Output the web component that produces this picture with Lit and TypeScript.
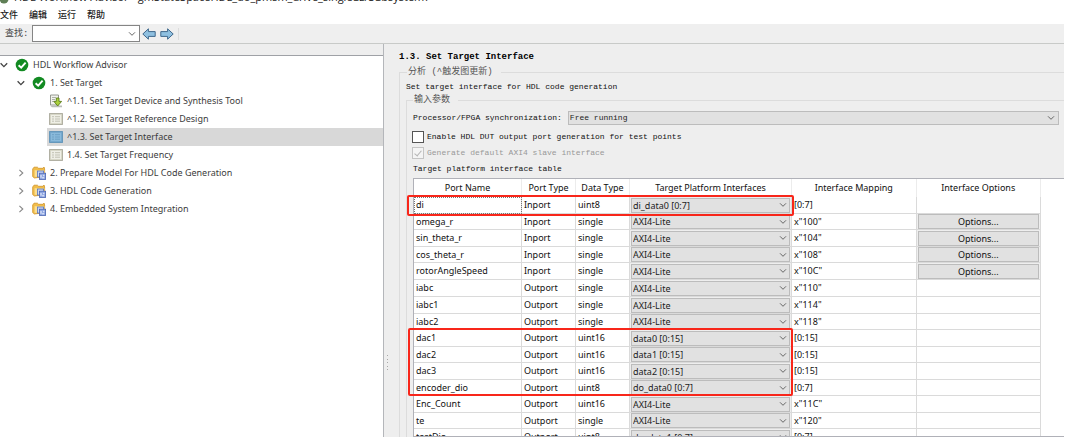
import { LitElement, html, svg, css, nothing } from "lit";
import { customElement, property } from "lit/decorators.js";
import { classMap } from "lit/directives/class-map.js";

type Row = {
  name: string;
  kind: "Inport" | "Outport";
  type: string;
  target: string;
  map: string;
  options?: boolean;
};

const ROWS: Row[] = [
  { name: "di", kind: "Inport", type: "uint8", target: "di_data0 [0:7]", map: "[0:7]" },
  { name: "omega_r", kind: "Inport", type: "single", target: "AXI4-Lite", map: 'x"100"', options: true },
  { name: "sin_theta_r", kind: "Inport", type: "single", target: "AXI4-Lite", map: 'x"104"', options: true },
  { name: "cos_theta_r", kind: "Inport", type: "single", target: "AXI4-Lite", map: 'x"108"', options: true },
  { name: "rotorAngleSpeed", kind: "Inport", type: "single", target: "AXI4-Lite", map: 'x"10C"', options: true },
  { name: "iabc", kind: "Outport", type: "single", target: "AXI4-Lite", map: 'x"110"' },
  { name: "iabc1", kind: "Outport", type: "single", target: "AXI4-Lite", map: 'x"114"' },
  { name: "iabc2", kind: "Outport", type: "single", target: "AXI4-Lite", map: 'x"118"' },
  { name: "dac1", kind: "Outport", type: "uint16", target: "data0 [0:15]", map: "[0:15]" },
  { name: "dac2", kind: "Outport", type: "uint16", target: "data1 [0:15]", map: "[0:15]" },
  { name: "dac3", kind: "Outport", type: "uint16", target: "data2 [0:15]", map: "[0:15]" },
  { name: "encoder_dio", kind: "Outport", type: "uint8", target: "do_data0 [0:7]", map: "[0:7]" },
  { name: "Enc_Count", kind: "Outport", type: "uint16", target: "AXI4-Lite", map: 'x"11C"' },
  { name: "te", kind: "Outport", type: "single", target: "AXI4-Lite", map: 'x"120"' },
  { name: "testDio", kind: "Outport", type: "uint8", target: "do_data1 [0:7]", map: "[0:7]" },
];

const chevronDown = html`<svg class="chev" width="8" height="6" viewBox="0 0 8 6" aria-hidden="true">
  <path d="M1 1.3 L4 4.3 L7 1.3" fill="none" stroke="currentColor" stroke-width="1" />
</svg>`;

type IconName = "check" | "device" | "task" | "taskActive" | "folder";

const ICONS: Record<IconName, unknown> = {
  check: svg`
    <circle cx="7" cy="7" r="6.3" fill="#128a22"/>
    <path d="M3.6 7.2 L6.2 9.7 L10.6 4.6" fill="none" stroke="#fff" stroke-width="1.9"/>`,
  device: svg`
    <path d="M1.5 1 H9.5 V11 H1.5 Z" fill="#f2f3ee" stroke="#8b8f86" stroke-width=".9"/>
    <path d="M3 3.5 H7 M3 5.5 H6 M3 7.5 H6" stroke="#9a9f98" stroke-width=".8"/>
    <path d="M1 11.5 H13 V13.3 H3 Z" fill="#b9bdb9"/>
    <path d="M7.3 4 H10 V7.4 H12.6 L8.7 12 L4.9 7.4 H7.3 Z" fill="#a9cf3c" stroke="#5c7d1b" stroke-width=".9"/>`,
  task: svg`
    <rect x=".6" y="1.6" width="12.8" height="10.8" fill="#dcdccd" stroke="#aaa99c" stroke-width="1"/>
    <rect x="2" y="3" width="10" height="8" fill="#efefe6"/>
    <path d="M3 4.7 H5 M3 7 H5 M3 9.2 H5 M6 4.7 H11 M6 7 H11 M6 9.2 H11" stroke="#bcbcae" stroke-width=".9"/>`,
  taskActive: svg`
    <rect x=".6" y="1.6" width="12.8" height="10.8" fill="#78abd0" stroke="#5f93b9" stroke-width="1"/>
    <rect x="2" y="3" width="10" height="8" fill="#8abadb"/>
    <path d="M3 4.7 H5 M3 7 H5 M3 9.2 H5 M6 4.7 H11 M6 7 H11 M6 9.2 H11" stroke="#6b9ec3" stroke-width=".9"/>`,
  folder: svg`
    <path d="M.7 3 L2 1.2 H5.4 L6.6 2.3 H11 L12 1 L12.6 3 V10.6 L2.4 12 L.7 10.6 Z" fill="#f1bd4a" stroke="#cf9327" stroke-width=".8"/>
    <path d="M2.6 4.2 H12.4 V10.8 H2.6 Z" fill="#fbdf92"/>
    <rect x="5.4" y="5" width="6.2" height="6" fill="#c9d6f5" stroke="#5874bd" stroke-width=".8"/>
    <rect x="7.4" y="7.2" width="6.2" height="6.2" fill="#8ea6e2" stroke="#4964b2" stroke-width=".8"/>
    <path d="M9 9 V11.8 M11.8 8.8 V10.2 M10.2 11.8 H12.2" stroke="#fff" stroke-width=".9"/>`,
};

@customElement("tree-row")
class TreeRow extends LitElement {
  @property() icon: IconName = "task";
  @property() label = "";
  @property({ type: Number }) level = 1;
  @property() state: "open" | "closed" | "leaf" = "leaf";
  @property({ type: Boolean }) selected = false;

  static styles = css`
    :host {
      display: block;
    }
    .row {
      display: flex;
      align-items: center;
      height: 18px;
      color: #3c3c3c;
      white-space: nowrap;
    }
    .l2 {
      padding-left: 17px;
    }
    .l3 {
      margin-left: 47px;
      padding-left: 2px;
    }
    .on {
      background: #d8d8d8;
    }
    .twist {
      width: 8px;
      height: 8px;
      margin-right: 7px;
      flex: none;
    }
    .icon {
      width: 14px;
      height: 14px;
      margin-right: 4px;
      flex: none;
    }
  `;

  render() {
    const cls = { row: true, l2: this.level === 2, l3: this.level === 3, on: this.selected };
    return html`<div class=${classMap(cls)} role="treeitem" aria-selected=${this.selected}>
      ${this.state === "leaf"
        ? nothing
        : html`<svg class="twist" viewBox="0 0 8 8">
            ${this.state === "open"
              ? svg`<path d="M.6 2.2 L3.9 5.6 L7.2 2.2" fill="none" stroke="#444" stroke-width="1.3"/>`
              : svg`<path d="M2.4 .8 L5.8 4 L2.4 7.2" fill="none" stroke="#888" stroke-width="1.1"/>`}
          </svg>`}
      <svg class="icon" viewBox="0 0 14 14">${ICONS[this.icon]}</svg>
      <span>${this.label}</span>
    </div>`;
  }
}

@customElement("app-root")
class AppRoot extends LitElement {
  static styles = css`
    :host {
      --ui: "Noto Sans", "Open Sans", "Noto Sans CJK SC", sans-serif;
      --mono: "Liberation Mono", "Noto Sans CJK SC", monospace;
      display: flex;
      flex-direction: column;
      height: 100vh;
      padding-right: 16px;
      box-sizing: border-box;
      overflow: hidden;
      background: #fff;
      color: #222;
      font: 9px/14px var(--ui);
    }
    * {
      box-sizing: border-box;
    }
    .title {
      display: flex;
      align-items: flex-end;
      gap: 4px;
      height: 6px;
      flex: none;
      overflow: hidden;
      font: 11px/18px "Open Sans", sans-serif;
      white-space: nowrap;
    }
    .title svg {
      flex: none;
    }
    .menu {
      display: flex;
      align-items: center;
      gap: 11px;
      height: 18px;
      flex: none;
    }
    button {
      font: inherit;
      color: inherit;
      padding: 0;
      margin: 0;
      border: 0;
      background: none;
    }
    .menu button {
      font-weight: 500;
    }
    .tools {
      display: flex;
      align-items: center;
      height: 20px;
      flex: none;
      padding-left: 5px;
      background: #efefef;
      border-bottom: 1px solid #c8cac8;
    }
    .tools label {
      width: 27px;
      font: 9px/14px var(--mono);
      color: #444;
    }
    .combo {
      display: grid;
      align-items: center;
    }
    .combo > * {
      grid-area: 1 / 1;
    }
    .chev {
      justify-self: end;
      margin-right: 4px;
      pointer-events: none;
      color: #666;
    }
    .find {
      width: 108px;
    }
    .find input {
      width: 100%;
      height: 17px;
      padding: 0 14px 0 3px;
      border: 1px solid #858585;
      background: #fff;
      font: inherit;
      border-radius: 0;
    }
    .nav {
      display: flex;
      gap: 4px;
      padding: 0 4px 0 2px;
      border-right: 1px solid #dcdcdc;
    }
    .nav button {
      display: flex;
    }
    .main {
      display: grid;
      grid-template-columns: 384px 6px minmax(0, 1fr);
      flex: 1;
      min-height: 0;
      background: #eeeeee;
    }
    .side {
      padding-top: 11px;
      border-right: 1px solid #b4b6ba;
    }
    .tree {
      height: 100%;
      background: #fff;
      border-top: 1px solid #9fa1a6;
    }
    .split {
      padding-top: 311px;
      color: #a8a8a8;
    }
    .pane {
      display: flex;
      flex-direction: column;
      min-height: 0;
      padding: 6px 0 0 9px;
      font: 8px/14px var(--mono);
      color: #111;
    }
    h1 {
      margin: 0 0 1px;
      font: bold 9px/14px var(--mono);
      color: #000;
    }
    fieldset {
      display: flex;
      flex-direction: column;
      flex: 1;
      min-width: 0;
      min-height: 0;
      margin: 0;
      padding: 0 0 0 6px;
      border: 1px solid #dcdcdc;
      border-width: 1px 0 0 1px;
    }
    legend {
      padding: 0 8px 0 1px;
      font: 9px/14px var(--mono);
      color: #555;
    }
    .outer-legend {
      margin-left: 1px;
    }
    .desc {
      height: 14px;
      margin: 0;
      padding-top: 1px;
      flex: none;
    }
    .sync {
      display: flex;
      align-items: center;
      gap: 6px;
      margin: 4px 5px 4px 0;
      flex: none;
    }
    .sync .combo {
      flex: 1;
    }
    select {
      appearance: none;
      width: 100%;
      min-width: 0;
      margin: 0;
      border: 1px solid #bcbcbc;
      border-radius: 0;
      background: #e1e1e1;
      color: #222;
      font: inherit;
    }
    .sync select {
      height: 14px;
      padding: 0 14px 0 1px;
      line-height: 12px;
    }
    .check {
      display: flex;
      align-items: center;
      gap: 3px;
      height: 16px;
      flex: none;
    }
    .check.off {
      color: #999;
    }
    .check input {
      appearance: none;
      display: grid;
      place-items: center;
      width: 12px;
      height: 12px;
      margin: 0 0 0 -1px;
      border: 1px solid #555;
      background: #fff;
    }
    .check input:disabled {
      border-color: #c4c4c4;
      background: #f4f4f4;
    }
    .check input:checked::before {
      content: "";
      width: 3px;
      height: 6px;
      margin-bottom: 2px;
      border: solid #b5b5b5;
      border-width: 0 1px 1px 0;
      rotate: 40deg;
    }
    .caption {
      height: 17px;
      line-height: 16px;
      flex: none;
    }
    .grid {
      position: relative;
      flex: 1;
      min-height: 0;
      font: 9px/14px var(--ui);
    }
    .clip {
      height: 100%;
      overflow: hidden;
      background: #fff;
      border: 1px solid #b0b1b8;
      border-right: 0;
    }
    table {
      width: 627px;
      table-layout: fixed;
      border-collapse: separate;
      border-spacing: 0;
    }
    .c-name {
      width: 108px;
    }
    .c-kind,
    .c-type {
      width: 54px;
    }
    .c-target {
      width: 162px;
    }
    th {
      height: 18px;
      padding: 0;
      font-weight: 400;
      border-right: 1px solid #ececec;
      white-space: nowrap;
    }
    td {
      height: 17px;
      padding: 0 0 0 2px;
      line-height: 14px;
      border-right: 1px solid #dadada;
      border-bottom: 1px solid #dadada;
      white-space: nowrap;
      overflow: hidden;
    }
    tr:nth-child(even):not(:nth-child(6)) td {
      height: 16px;
    }
    td.ctl {
      padding: 0 1px 0 1px;
      background: #eee;
    }
    td.ctl select {
      height: 15px;
      padding: 0 14px 0 1px;
      line-height: 13px;
    }
    td.ctl .chev {
      margin-right: 3px;
    }
    tr:first-child td:first-child {
      outline: 1px dotted #777;
      outline-offset: -1px;
    }
    td.ctl button {
      display: block;
      width: 100%;
      height: 15px;
      line-height: 13px;
      border: 1px solid #bcbcbc;
      background: #e1e1e1;
    }
    .mark {
      position: absolute;
      border: 2px solid #f8261a;
      border-radius: 2px;
      pointer-events: none;
    }
    .mark.one {
      left: -6px;
      top: 17px;
      width: 387px;
      height: 21px;
    }
    .mark.two {
      left: -5px;
      top: 150px;
      width: 385px;
      height: 68px;
    }
  `;

  private arrow(label: string, d: string) {
    return html`<button aria-label=${label}>
      <svg width="14" height="12" viewBox="0 0 14 12">
        <path d=${d} fill="#8fc0e0" stroke="#40688c" stroke-width="1" stroke-linejoin="round" />
      </svg>
    </button>`;
  }

  private row(r: Row) {
    return html`<tr>
      <td>${r.name}</td>
      <td>${r.kind}</td>
      <td>${r.type}</td>
      <td class="ctl">
        <div class="combo">
          <select aria-label="Target Platform Interfaces ${r.name}">
            <option>${r.target}</option>
          </select>
          ${chevronDown}
        </div>
      </td>
      <td>${r.map}</td>
      ${r.options ? html`<td class="ctl"><button>Options...</button></td>` : html`<td></td>`}
    </tr>`;
  }

  render() {
    return html`
      <div class="title">
        <svg width="10" height="12" viewBox="0 0 10 12"><circle cx="4" cy="5" r="4.5" fill="#5f7f56" /></svg>
        <span>HDL Workflow Advisor - gmStateSpaceHDL_do_pmsm_drive_singleuz/Subsystem7</span>
      </div>
      <nav class="menu">
        <button>文件</button><button>编辑</button><button>运行</button><button>帮助</button>
      </nav>
      <div class="tools">
        <label for="find">查找:</label>
        <div class="combo find"><input id="find" type="text" />${chevronDown}</div>
        <div class="nav">
          ${this.arrow("Back", "M.8 6 L6.4 .8 V3.6 H13.2 V8.4 H6.4 V11.2 Z")}
          ${this.arrow("Forward", "M13.2 6 L7.6 .8 V3.6 H.8 V8.4 H7.6 V11.2 Z")}
        </div>
      </div>
      <div class="main">
        <div class="side">
          <div class="tree" role="tree">
            <tree-row icon="check" state="open" label="HDL Workflow Advisor"></tree-row>
            <tree-row icon="check" state="open" level="2" label="1. Set Target"></tree-row>
            <tree-row icon="device" level="3" label="^1.1. Set Target Device and Synthesis Tool"></tree-row>
            <tree-row icon="task" level="3" label="^1.2. Set Target Reference Design"></tree-row>
            <tree-row icon="taskActive" level="3" selected label="^1.3. Set Target Interface"></tree-row>
            <tree-row icon="task" level="3" label="1.4. Set Target Frequency"></tree-row>
            <tree-row icon="folder" state="closed" level="2" label="2. Prepare Model For HDL Code Generation"></tree-row>
            <tree-row icon="folder" state="closed" level="2" label="3. HDL Code Generation"></tree-row>
            <tree-row icon="folder" state="closed" level="2" label="4. Embedded System Integration"></tree-row>
          </div>
        </div>
        <div class="split">
          <svg width="6" height="16" viewBox="0 0 6 16" fill="currentColor">
            <path d="M3 0h1v1h-1z M3 4h1v1h-1z M3 7h1v1h-1z M3 11h1v1h-1z M3 14h1v1h-1z" />
          </svg>
        </div>
        <div class="pane">
          <h1>1.3. Set Target Interface</h1>
          <fieldset>
            <legend class="outer-legend">分析 (^触发图更新)</legend>
            <p class="desc">Set target interface for HDL code generation</p>
            <fieldset>
              <legend>输入参数</legend>
              <div class="sync">
                <label for="sync">Processor/FPGA synchronization:</label>
                <div class="combo">
                  <select id="sync"><option>Free running</option></select>${chevronDown}
                </div>
              </div>
              <label class="check"><input type="checkbox" />Enable HDL DUT output port generation for test points</label>
              <label class="check off"><input type="checkbox" checked disabled />Generate default AXI4 slave interface</label>
              <div class="caption" id="cap">Target platform interface table</div>
              <div class="grid">
                <div class="clip">
                  <table aria-labelledby="cap">
                    <colgroup>
                      <col class="c-name" /><col class="c-kind" /><col class="c-type" /><col class="c-target" /><col /><col />
                    </colgroup>
                    <thead>
                      <tr>
                        <th>Port Name</th><th>Port Type</th><th>Data Type</th>
                        <th>Target Platform Interfaces</th><th>Interface Mapping</th><th>Interface Options</th>
                      </tr>
                    </thead>
                    <tbody>${ROWS.map((r) => this.row(r))}</tbody>
                  </table>
                </div>
                <div class="mark one"></div>
                <div class="mark two"></div>
              </div>
            </fieldset>
          </fieldset>
        </div>
      </div>
    `;
  }
}
